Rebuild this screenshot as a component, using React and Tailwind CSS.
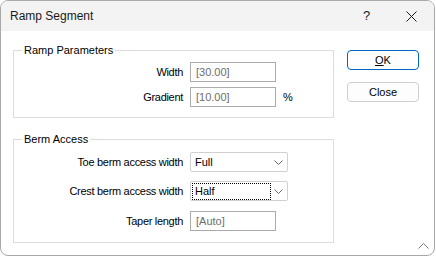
import React from 'react'

const font = { fontFamily: '"Liberation Sans", Arial, sans-serif' }

function Chevron(){
  return (
    <svg width="9" height="5" viewBox="0 0 9 5" className="shrink-0">
      <path d="M0.5 0.5 L4.5 4.5 L8.5 0.5" fill="none" stroke="#6a6a6a" strokeWidth="1" />
    </svg>
  )
}

function Row({ label, children, className = '' }){
  return (
    <div className={'flex items-center ' + className}>
      <div className="w-[170px] pr-[1px] text-right text-[11px] tracking-[-0.3px] text-black whitespace-nowrap">{label}</div>
      <div className="ml-[6px] flex items-center">{children}</div>
    </div>
  )
}

function TextBox({ value }){
  return (
    <div className="w-[86px] h-[20px] border border-[#ababab] bg-white flex items-center pl-[5px] text-[11px] text-[#6d6d6d]">{value}</div>
  )
}

function Combo({ value, focused }){
  return (
    <div className="w-[98px] h-[20px] border border-[#d0d0d0] rounded-[2px] bg-white flex items-center pl-[2px] pr-[4px] text-[11px] text-black">
      {focused
        ? <span className="w-[77px] h-[15px] flex items-center pl-[2px] outline-1 outline-dotted outline-black">{value}</span>
        : <span className="flex-1 pl-[2px]">{value}</span>}
      <span className="flex-1" />
      <Chevron />
    </div>
  )
}

function Group({ title, children, className = '' }){
  return (
    <fieldset className={'w-[321px] border border-[#dcdcdc] ' + className}>
      <legend className="ml-[8px] px-[2px] text-[11px] leading-[16px] text-black">{title}</legend>
      {children}
    </fieldset>
  )
}

export default function App(){
  return (
    <div className="w-[436px] h-[257px] bg-white" style={font}>
      <div className="relative w-[435px] h-[256px] border border-[#a8a8a8] rounded-[8px] overflow-hidden flex flex-col bg-white">
        <div className="h-[30px] bg-[#f3f3f3] flex items-center shrink-0">
          <div className="pl-[9px] text-[12px] text-[#1a1a1a] flex-1">Ramp Segment</div>
          <div className="w-[45px] h-full flex items-center justify-center text-[13px] text-[#1a1a1a]">?</div>
          <div className="w-[45px] h-full flex items-center justify-center">
            <svg width="11" height="11" viewBox="0 0 11 11">
              <path d="M0.5 0.5 L10.5 10.5 M10.5 0.5 L0.5 10.5" stroke="#1a1a1a" strokeWidth="1" />
            </svg>
          </div>
        </div>

        <div className="flex flex-1 pt-[11px]">
          <div className="ml-[12px] flex flex-col">
            <Group title="Ramp Parameters">
              <div className="flex flex-col pt-[4px] pb-[10px] gap-[5px]">
                <Row label="Width"><TextBox value="[30.00]" /></Row>
                <Row label="Gradient">
                  <TextBox value="[10.00]" />
                  <span className="ml-[7px] text-[11px] text-black">%</span>
                </Row>
              </div>
            </Group>

            <Group title="Berm Access" className="mt-[13px]">
              <div className="flex flex-col pt-[5px] pb-[11px]">
                <Row label="Toe berm access width"><Combo value="Full" /></Row>
                <Row label="Crest berm access width" className="mt-[9px]"><Combo value="Half" focused /></Row>
                <Row label="Taper length" className="mt-[10px]"><TextBox value="[Auto]" /></Row>
              </div>
            </Group>
          </div>

          <div className="ml-[13px] pt-[8px] flex flex-col gap-[12px]">
            <button className="w-[72px] h-[20px] rounded-[4px] border border-[#0067c0] bg-white text-[11px] text-black flex items-center justify-center">
              <span><span className="underline">O</span>K</span>
            </button>
            <button className="w-[72px] h-[20px] rounded-[4px] border border-[#d0d0d0] bg-[#fdfdfd] text-[11px] text-black flex items-center justify-center">Close</button>
          </div>
        </div>

        <svg width="11" height="6" viewBox="0 0 11 6" className="absolute right-[5px] bottom-[6px]">
          <path d="M0.5 5.5 L5.5 0.5 L10.5 5.5" fill="none" stroke="#7a7a7a" strokeWidth="1" />
        </svg>
      </div>
    </div>
  )
}
